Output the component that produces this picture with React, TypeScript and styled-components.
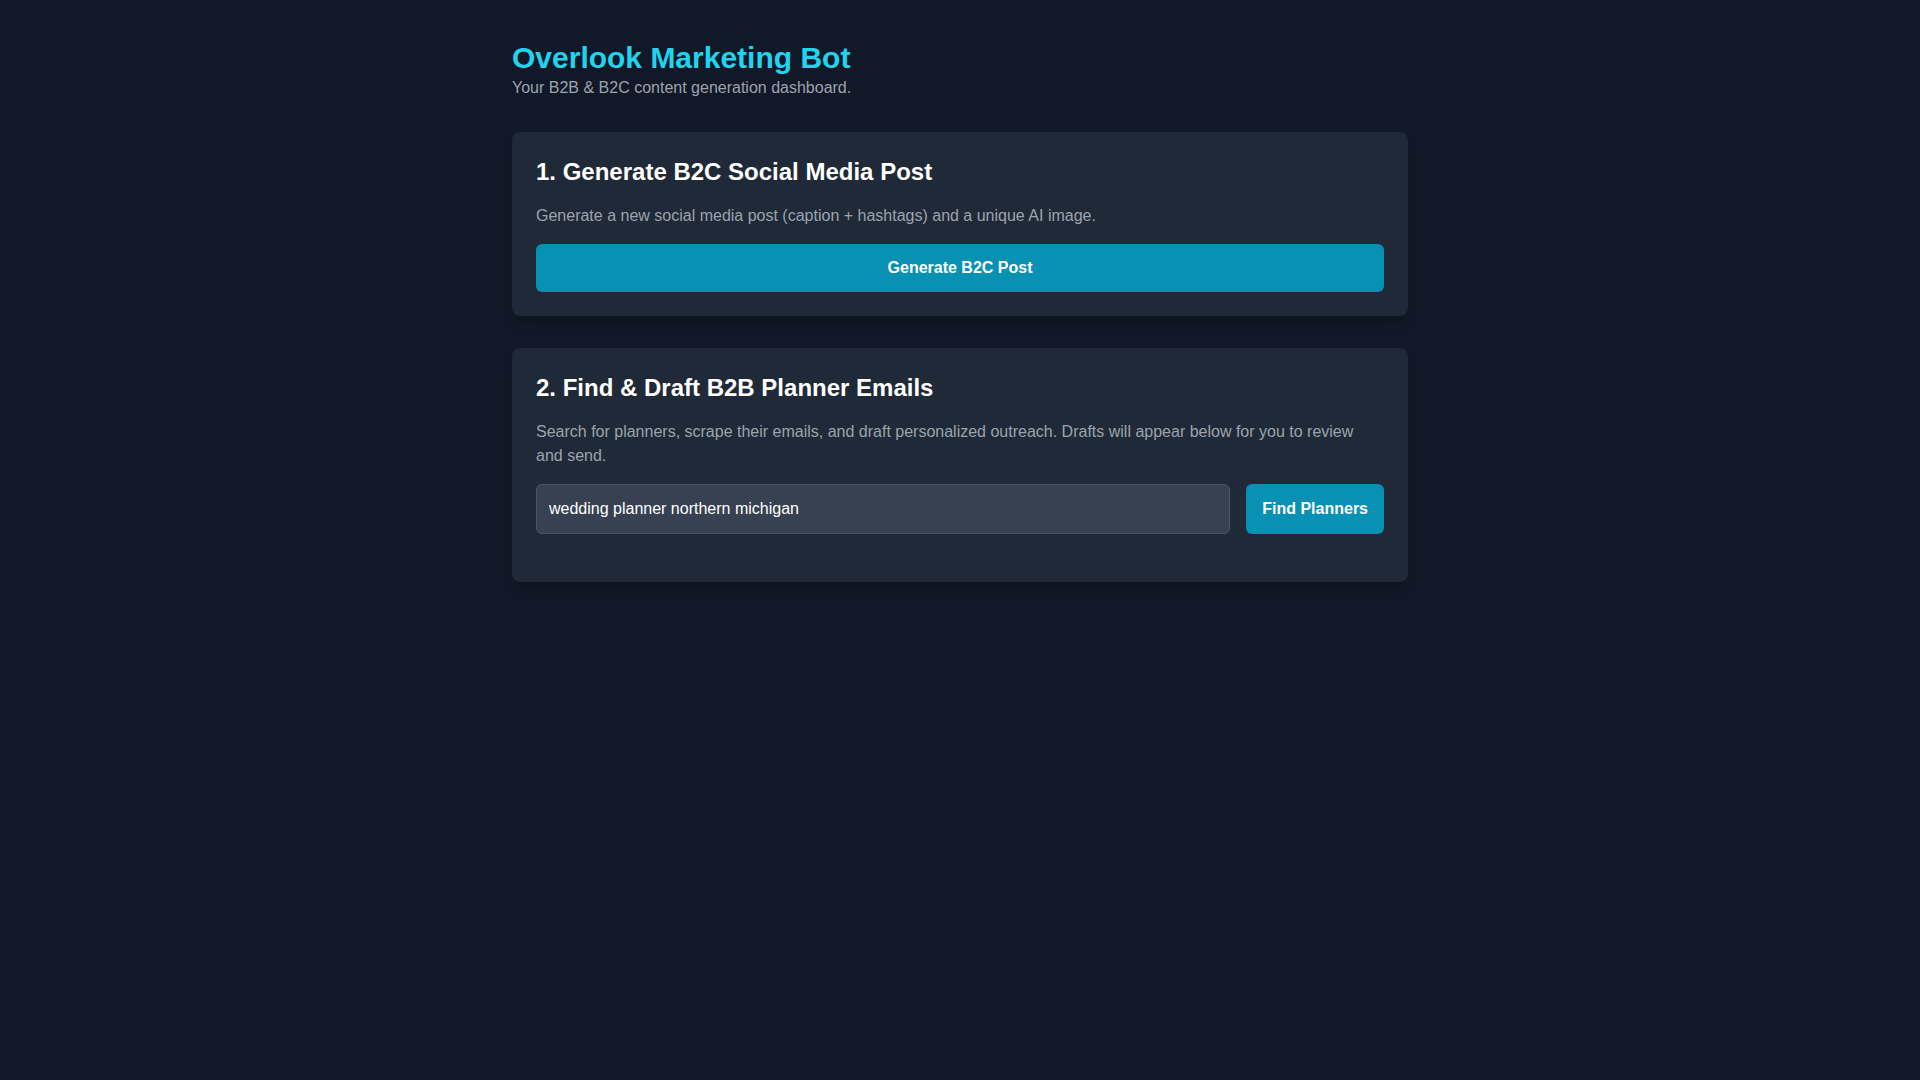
import React, { useState } from "react";
import styled, { createGlobalStyle } from "styled-components";

const GlobalStyle = createGlobalStyle`
  html, body {
    margin: 0;
    padding: 0;
    background: #111827;
    min-height: 100%;
  }
  body {
    font-family: "Liberation Sans", Arial, sans-serif;
    color: #f3f4f6;
    min-height: 100vh;
  }
  * {
    box-sizing: border-box;
  }
`;

const Page = styled.main`
  max-width: 896px;
  margin: 0 auto;
  padding-top: 40px;
`;

const Header = styled.header`
  margin-bottom: 32px;
`;

const Title = styled.h1`
  margin: 0;
  font-size: 30px;
  line-height: 36px;
  font-weight: 700;
  color: #22d3ee;
`;

const Subtitle = styled.p`
  margin: 0;
  font-size: 16px;
  line-height: 24px;
  color: #9ca3af;
`;

const Card = styled.section`
  background: #1f2937;
  border-radius: 8px;
  padding: 24px;
  margin-bottom: 32px;
  box-shadow: 0 10px 15px -3px rgba(0, 0, 0, 0.1), 0 4px 6px -4px rgba(0, 0, 0, 0.1);
`;

const CardTitle = styled.h2`
  margin: 0 0 16px;
  font-size: 24px;
  line-height: 32px;
  font-weight: 700;
  color: #ffffff;
`;

const CardText = styled.p`
  margin: 0 0 16px;
  font-size: 16px;
  line-height: 24px;
  color: #9ca3af;
`;

const Button = styled.button<{ $block?: boolean }>`
  display: block;
  width: ${(p) => (p.$block ? "100%" : "auto")};
  flex-shrink: 0;
  padding: 12px 16px;
  border: none;
  border-radius: 6px;
  background: #0891b2;
  color: #ffffff;
  font-family: inherit;
  font-size: 16px;
  line-height: 24px;
  font-weight: 700;
  cursor: pointer;

  &:hover {
    background: #0e7490;
  }
`;

const SearchRow = styled.form`
  display: flex;
  gap: 16px;
  margin-bottom: 24px;
`;

const SearchInput = styled.input`
  flex: 1;
  min-width: 0;
  padding: 12px;
  background: #374151;
  border: 1px solid #4b5563;
  border-radius: 6px;
  color: #ffffff;
  font-family: inherit;
  font-size: 16px;
  line-height: 24px;
  outline: none;

  &:focus {
    border-color: #22d3ee;
  }
`;

const App = (): JSX.Element => {
  const [query, setQuery] = useState("wedding planner northern michigan");

  return (
    <>
      <GlobalStyle />
      <Page>
        <Header>
          <Title>Overlook Marketing Bot</Title>
          <Subtitle>Your B2B &amp; B2C content generation dashboard.</Subtitle>
        </Header>

        <Card>
          <CardTitle>1. Generate B2C Social Media Post</CardTitle>
          <CardText>
            Generate a new social media post (caption + hashtags) and a unique AI image.
          </CardText>
          <Button $block>Generate B2C Post</Button>
        </Card>

        <Card>
          <CardTitle>2. Find &amp; Draft B2B Planner Emails</CardTitle>
          <CardText>
            Search for planners, scrape their emails, and draft personalized outreach. Drafts
            will appear below for you to review and send.
          </CardText>
          <SearchRow onSubmit={(e) => e.preventDefault()}>
            <SearchInput
              type="text"
              value={query}
              onChange={(e) => setQuery(e.target.value)}
            />
            <Button type="submit">Find Planners</Button>
          </SearchRow>
        </Card>
      </Page>
    </>
  );
};

export default App;
